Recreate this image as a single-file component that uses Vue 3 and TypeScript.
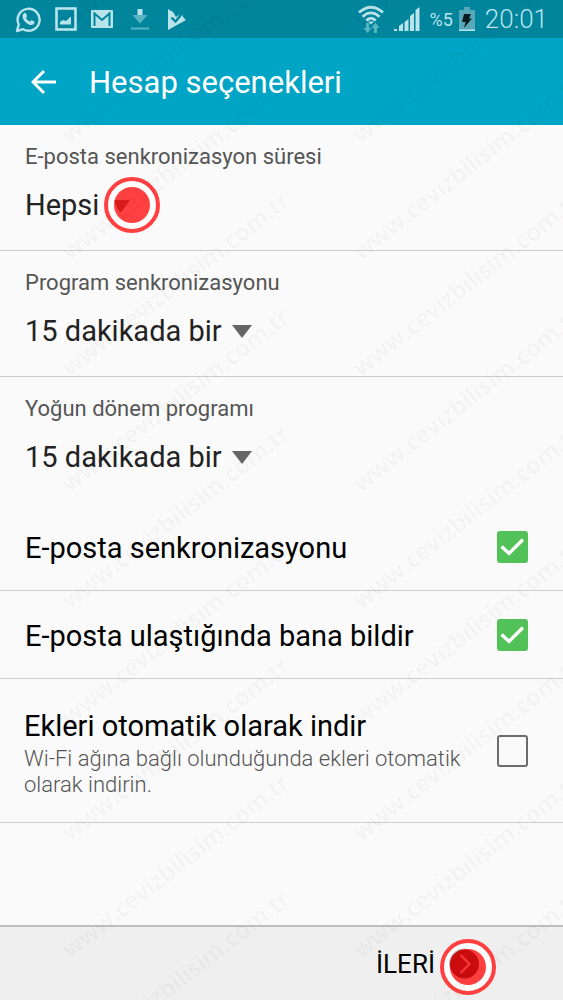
<script setup lang="ts">
import { ref } from 'vue'

interface Picker {
  id: string
  label: string
  value: string
  marked: boolean
}

const pickers: Picker[] = [
  { id: 'period', label: 'E-posta senkronizasyon süresi', value: 'Hepsi', marked: true },
  { id: 'schedule', label: 'Program senkronizasyonu', value: '15 dakikada bir', marked: false },
  { id: 'peak', label: 'Yoğun dönem programı', value: '15 dakikada bir', marked: false },
]

const toggles = ref([
  { id: 'sync', title: 'E-posta senkronizasyonu', note: '', on: true },
  { id: 'notify', title: 'E-posta ulaştığında bana bildir', note: '', on: true },
  {
    id: 'attachments',
    title: 'Ekleri otomatik olarak indir',
    note: 'Wi-Fi ağına bağlı olunduğunda ekleri otomatik olarak indirin.',
    on: false,
  },
])

// Only stamps that touch the window are drawn.
const columns = Math.ceil((window.innerWidth - 68) / 291)
const rows = Math.ceil((window.innerHeight + 152) / 116)
const stamps: { x: number; y: number }[] = []
for (let col = 0; col < columns; col++) {
  for (let row = 0; row < rows; row++) {
    stamps.push({ x: 70 + col * 291, y: 28 + row * 116 + Math.round(row / 3) })
  }
}
</script>

<template>
  <div class="screen">
    <div class="status">
      <div class="notices">
        <svg width="26" height="28" viewBox="0 0 26 28" aria-hidden="true">
          <path d="M2 26 3.700 19.500A11 11 0 1 1 8 24.200Z" fill="none" stroke="currentColor" stroke-width="2.400" stroke-linejoin="round" />
          <path d="M8.600 8.400c1-1 2-.8 2.500.2l1 2.300c.2.700-.9 1.500-1 2.100.8 1.700 2 2.800 3.700 3.500.6 0 1.300-1.500 2-1.200l2.400 1.200c.9.600.2 2-.7 2.700-2.300 1.700-5.300.4-7.700-1.800C8.300 15 6.300 11.200 8.600 8.400Z" fill="currentColor" />
        </svg>
        <svg width="22" height="24" viewBox="0 0 22 24" aria-hidden="true">
          <rect x="1.500" y="1.500" width="19" height="21" fill="none" stroke="currentColor" stroke-width="2.600" />
          <path d="M5 17.500V15l3-2 3 1 5-4.500v8Z" fill="currentColor" />
        </svg>
        <svg width="22" height="18" viewBox="0 0 22 18" aria-hidden="true">
          <rect width="22" height="18" rx="1" fill="currentColor" />
          <path d="M3.500 16V3.500L11 10l7.500-6.500V16" fill="none" stroke="#00859d" stroke-width="2" />
        </svg>
        <svg width="26" height="21" viewBox="-4 0 26 21" aria-hidden="true">
          <path d="M6.500 0h5v6h-5Z" fill="currentColor" />
          <path d="M1.500 6h15L9 14.500ZM0 18.500h18v2H0Z" fill="#58b5c4" />
        </svg>
        <svg width="20" height="21" viewBox="0 0 20 21" aria-hidden="true">
          <path d="M1 0 6 3 9 8l6-4 1 4 3 3L1 21Z" fill="currentColor" />
          <path d="m4.500 8.500 4 4L15.500 4" fill="none" stroke="#00859d" stroke-width="2.400" />
        </svg>
      </div>
      <div class="system">
        <svg width="26" height="28" viewBox="0 0 26 28" aria-hidden="true">
          <g fill="none" stroke="currentColor" stroke-width="2.800">
            <path d="M1 7.500Q13-3 25 7.500" />
            <path d="M4.500 11.800Q13 4 21.500 11.800" />
            <path d="M8.300 15.500Q13 11 17.700 15.500" />
          </g>
          <path d="m10 16.500 3 3 3-3Z" fill="currentColor" />
          <path d="M8 18h3v5h2.500L9.500 28 5.500 23H8ZM16 28v-5h-2.500L17.500 17.500 21.500 23H19v5Z" fill="#58b5c4" />
        </svg>
        <svg width="26" height="25" viewBox="0 0 26 25" aria-hidden="true">
          <path d="M0 22h3v2H0ZM5 19l4-3v8H5ZM10.500 15l4-3v12h-4ZM16 9l4-3v18h-4ZM21.500 3 25.500 0v24h-4Z" fill="currentColor" />
        </svg>
        <span class="percent">%5</span>
        <svg width="16" height="24" viewBox="0 0 16 24" aria-hidden="true">
          <path d="M5 0h6v3h5v21H0V3h5Z" fill="#58a9b8" />
          <path d="M0 22.500h16V24H0Z" fill="currentColor" />
          <path d="M5 7h7l-2 4.500h3L5 21l1.500-6H3Z" fill="#081d22" />
        </svg>
        <span class="clock">20:01</span>
      </div>
    </div>

    <header class="bar">
      <button class="back" type="button" aria-label="Geri">
        <svg width="26" height="26" viewBox="0 0 26 26" aria-hidden="true">
          <path d="M25 13H2M13 2 2 13l11 11" fill="none" stroke="currentColor" stroke-width="3" />
        </svg>
      </button>
      <h1>Hesap seçenekleri</h1>
    </header>

    <main>
      <div v-for="p in pickers" :key="p.id" class="picker">
        <label :for="p.id">{{ p.label }}</label>
        <div class="choice">
          <select :id="p.id">
            <option>{{ p.value }}</option>
          </select>
          <span class="arrow">
            <svg width="20" height="13" viewBox="0 0 20 13" aria-hidden="true">
              <path d="M0 0h20L10 13Z" fill="#666" />
            </svg>
            <svg v-if="p.marked" class="marker" width="56" height="56" viewBox="0 0 56 56" aria-hidden="true">
              <circle cx="28" cy="28" r="27" fill="#fff" />
              <circle cx="28" cy="28" r="26" fill="none" stroke="#ff4041" stroke-width="4" />
              <circle cx="28" cy="28" r="18" fill="#ff4041" />
              <path d="M10.500 23H26L17 35.500Q11 30 10.500 23Z" fill="#da1b1c" />
            </svg>
          </span>
        </div>
      </div>

      <label v-for="t in toggles" :key="t.id" class="toggle" :class="{ tall: t.note }">
        <span class="words">
          <span class="title">{{ t.title }}</span>
          <span v-if="t.note" class="note">{{ t.note }}</span>
        </span>
        <span class="box">
          <input v-model="t.on" type="checkbox" />
          <svg v-if="t.on" width="31" height="32" viewBox="0 0 31 32" aria-hidden="true">
            <path d="m4.500 15.500 7.500 7L26 8.500" fill="none" stroke="#fff" stroke-width="3.400" />
          </svg>
        </span>
      </label>
    </main>

    <footer>
      <button class="next" type="button">
        <span>İLERİ</span>
        <svg width="56" height="56" viewBox="0 0 56 56" aria-hidden="true">
          <circle cx="28" cy="28" r="27" fill="#fff" />
          <circle cx="24" cy="24.500" r="15" fill="#bbb" />
          <circle cx="28" cy="28" r="26" fill="none" stroke="#ff4041" stroke-width="4" />
          <circle cx="28" cy="28" r="18" fill="#ff4041" />
          <circle cx="24.500" cy="25" r="14.500" fill="#cb0c0e" />
          <path d="m20.500 16 9 9-9 9" fill="none" stroke="#f43537" stroke-width="2.400" />
        </svg>
      </button>
    </footer>

    <svg class="watermark" aria-hidden="true">
      <text v-for="(s, i) in stamps" :key="i" :transform="`translate(${s.x} ${s.y}) rotate(-38)`">www.cevizbilisim.com.tr</text>
    </svg>
  </div>
</template>

<style>
body {
  margin: 0;
  background: #fafafa;
}
</style>

<style scoped>
.screen {
  position: relative;
  display: flex;
  flex-direction: column;
  min-height: 100vh;
  overflow: hidden;
  background: #fafafa;
  color: #000;
  font-family: Roboto, "Noto Sans", sans-serif;
}

svg {
  display: block;
  flex: none;
}

button,
select {
  margin: 0;
  padding: 0;
  border: 0;
  background: none;
  color: inherit;
  font: inherit;
}

.status {
  display: flex;
  align-items: center;
  justify-content: space-between;
  height: 38px;
  padding: 0 15px;
  background: #00859d;
  color: #b9e4ec;
}

.notices {
  display: flex;
  align-items: center;
  gap: 14px;
}

.system {
  display: flex;
  align-items: center;
  gap: 10px;
}

.percent {
  margin-right: -4px;
  font-size: 18px;
}

.clock {
  font-size: 26px;
  font-weight: 300;
  line-height: 38px;
}

.bar {
  display: flex;
  align-items: center;
  gap: 32px;
  height: 87px;
  padding: 0 31px;
  background: #00a5c5;
  color: #fff;
}

h1 {
  margin: 0;
  padding-top: 2px;
  font-size: 31px;
  font-weight: 400;
  line-height: 40px;
}

main {
  flex: 1;
}

.picker {
  box-sizing: border-box;
  height: 126px;
  padding: 18px 25px 0;
  border-bottom: 1px solid #ccc;
}

.picker:nth-child(3) {
  border-color: transparent;
}

.picker label {
  display: block;
  color: #555;
  font-size: 22px;
  line-height: 28px;
}

.choice {
  display: flex;
  align-items: center;
  gap: 10px;
  margin-top: 14px;
}

select {
  appearance: none;
  color: #222;
  font-size: 29px;
  line-height: 40px;
}

.arrow {
  position: relative;
}

.marker {
  position: absolute;
  top: -22px;
  left: -6px;
}

.toggle {
  box-sizing: border-box;
  display: flex;
  align-items: center;
  justify-content: space-between;
  gap: 24px;
  height: 88px;
  padding: 0 35px 0 25px;
  border-bottom: 1px solid #ccc;
}

.toggle.tall {
  height: 144px;
  padding-left: 24px;
}

.words {
  max-width: 450px;
  padding-top: 2px;
}

.title,
.note {
  display: block;
}

.title {
  font-size: 29px;
  line-height: 40px;
}

.note {
  color: #555;
  font-size: 22px;
  font-weight: 300;
  line-height: 26px;
}

.box {
  display: grid;
}

.box > * {
  grid-area: 1 / 1;
}

.box input {
  appearance: none;
  box-sizing: border-box;
  width: 31px;
  height: 32px;
  margin: 0;
  border: 2px solid #6c6c6c;
  border-radius: 3px;
}

.box input:checked {
  border-color: #52c158;
  background: #52c158;
}

.box svg {
  pointer-events: none;
}

footer {
  display: flex;
  justify-content: flex-end;
  height: 73px;
  padding-right: 67px;
  border-top: 2px solid #bfbfbf;
  background: #efefef;
}

.next {
  display: flex;
  align-items: center;
  gap: 5px;
  padding-top: 6px;
  font-size: 26px;
}

.next span {
  padding-bottom: 6px;
}

.watermark {
  position: absolute;
  inset: 0;
  width: 100%;
  height: 100%;
  pointer-events: none;
}

.watermark text {
  fill: rgba(0, 0, 0, 0.035);
  font-family: "Open Sans", "Noto Sans", sans-serif;
  font-size: 24px;
  font-weight: 600;
}
</style>
